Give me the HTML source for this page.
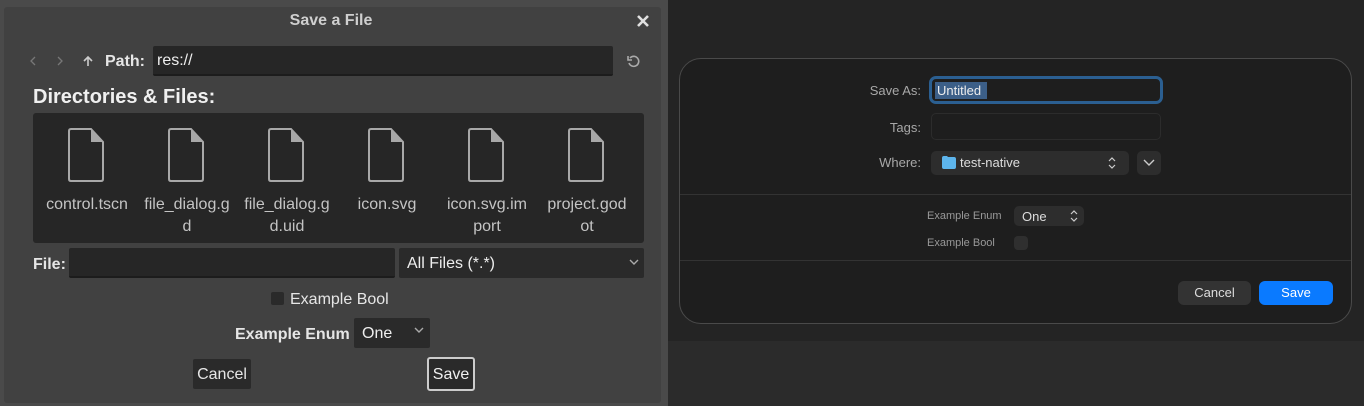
<!DOCTYPE html>
<html><head><meta charset="utf-8"><style>
*{box-sizing:border-box;margin:0;padding:0}
body{width:1364px;height:406px;overflow:hidden;background:#2b2b2b;font-family:"Liberation Sans",sans-serif;position:relative}
.a{position:absolute}
.l{color:#e6e6e6;font-size:16px;font-weight:bold}
.fl{color:#c4c4c4;font-size:16px;text-align:center;width:100px;line-height:22px}
.m{font-size:13px;color:#a8a8a8}
</style></head><body>
<div class="a" style="left:0;top:0;width:668px;height:406px;background:#4a4a4a"></div>
<div class="a" style="left:4px;top:7px;width:657px;height:396px;background:#414141;border-radius:3px"></div>
<div class="a" style="left:668px;top:0;width:696px;height:341px;background:#242424"></div>

<div class="a" style="left:0;width:662px;top:12px;text-align:center;color:#cfcfcf;font-size:16px;font-weight:bold">Save a File</div>
<svg class="a" style="left:636px;top:14px" width="14" height="14"><path d="M2 2L12 12M12 2L2 12" stroke="#e0e0e0" stroke-width="2.6"/></svg>

<svg class="a" style="left:28px;top:55px" width="70" height="12"><path d="M7 2L3 6L7 10" stroke="#777" fill="none" stroke-width="1.3"/><path d="M30 2L34 6L30 10" stroke="#777" fill="none" stroke-width="1.3"/><path d="M60 11V2M56 6L60 2L64 6" stroke="#ccc" fill="none" stroke-width="1.6"/></svg>
<div class="a l" style="left:105px;top:53px">Path:</div>
<div class="a" style="left:153px;top:46px;width:460px;height:30px;background:#262626;border-radius:2px;border-bottom:2px solid #1c1c1c;color:#eee;font-size:16px;padding:6px 4px">res://</div>
<svg class="a" style="left:626px;top:54px" width="14" height="14"><path d="M4 4A5 5 0 1 1 3 9" stroke="#aaa" fill="none" stroke-width="1.6"/><path d="M2 2V6H6" stroke="#aaa" fill="none" stroke-width="1.6"/></svg>

<div class="a" style="left:33px;top:86px;color:#f0f0f0;font-size:20px;font-weight:bold">Directories &amp; Files:</div>
<div class="a" style="left:33px;top:113px;width:611px;height:130px;background:#262626;border-radius:3px"></div>

<svg class="a" style="left:33px;top:126px" width="611" height="60">
<g fill="none" stroke="#a8a8a8" stroke-width="2">
<path d="M38 3H58L70 16V53Q70 55 68 55H38Q36 55 36 53V5Q36 3 38 3Z"/>
<path d="M138 3H158L170 16V53Q170 55 168 55H138Q136 55 136 53V5Q136 3 138 3Z"/>
<path d="M238 3H258L270 16V53Q270 55 268 55H238Q236 55 236 53V5Q236 3 238 3Z"/>
<path d="M338 3H358L370 16V53Q370 55 368 55H338Q336 55 336 53V5Q336 3 338 3Z"/>
<path d="M438 3H458L470 16V53Q470 55 468 55H438Q436 55 436 53V5Q436 3 438 3Z"/>
<path d="M538 3H558L570 16V53Q570 55 568 55H538Q536 55 536 53V5Q536 3 538 3Z"/>
</g>
<g fill="#a8a8a8"><path d="M58 3L70 16H58Z"/><path d="M158 3L170 16H158Z"/><path d="M258 3L270 16H258Z"/><path d="M358 3L370 16H358Z"/><path d="M458 3L470 16H458Z"/><path d="M558 3L570 16H558Z"/></g>
</svg>
<div class="a fl" style="left:37px;top:194px">control.tscn</div>
<div class="a fl" style="left:137px;top:194px">file_dialog.g<br>d</div>
<div class="a fl" style="left:237px;top:194px">file_dialog.g<br>d.uid</div>
<div class="a fl" style="left:337px;top:194px">icon.svg</div>
<div class="a fl" style="left:437px;top:194px">icon.svg.im<br>port</div>
<div class="a fl" style="left:537px;top:194px">project.god<br>ot</div>

<div class="a l" style="left:33px;top:256px">File:</div>
<div class="a" style="left:69px;top:248px;width:326px;height:30px;background:#262626;border-radius:2px;border-bottom:2px solid #1c1c1c"></div>
<div class="a" style="left:399px;top:248px;width:245px;height:30px;background:#2a2a2a;border-radius:2px;color:#eee;font-size:16px;padding:7px 8px">All Files (*.*)</div>
<svg class="a" style="left:629px;top:259px" width="10" height="7"><path d="M1 1L5 5L9 1" stroke="#aaa" fill="none" stroke-width="1.4"/></svg>

<div class="a" style="left:271px;top:292px;width:13px;height:13px;background:#2a2a2a;border-radius:2px"></div>
<div class="a" style="left:290px;top:291px;color:#e6e6e6;font-size:16px">Example Bool</div>
<div class="a l" style="left:235px;top:326px">Example Enum</div>
<div class="a" style="left:354px;top:318px;width:76px;height:30px;background:#2a2a2a;border-radius:2px;color:#eee;font-size:16px;padding:7px 8px">One</div>
<svg class="a" style="left:414px;top:327px" width="10" height="7"><path d="M1 1L5 5L9 1" stroke="#aaa" fill="none" stroke-width="1.4"/></svg>
<div class="a" style="left:193px;top:359px;width:58px;height:30px;background:#2a2a2a;border-radius:2px;color:#e6e6e6;font-size:16px;text-align:center;line-height:32px">Cancel</div>
<div class="a" style="left:427px;top:357px;width:48px;height:34px;background:#2a2a2a;border:2px solid #ccc;border-radius:3px;color:#f0f0f0;font-size:16px;text-align:center;line-height:32px">Save</div>

<div class="a" style="left:679px;top:58px;width:673px;height:266px;background:#1e1e1e;border:1px solid #4a4a4a;border-radius:22px"></div>
<div class="a m" style="left:820px;width:101px;text-align:right;top:83px">Save As:</div>
<div class="a" style="left:929px;top:76px;width:234px;height:28px;border:3px solid #2b5f91;border-radius:7px;background:#1e1e1e"></div>
<div class="a" style="left:935px;top:82px;height:17px;width:52px;background:#3c5f88;color:#eee;font-size:13px;line-height:17px;padding-left:2px">Untitled</div>
<div class="a m" style="left:820px;width:101px;text-align:right;top:120px">Tags:</div>
<div class="a" style="left:931px;top:113px;width:230px;height:27px;border:1px solid #2c2c2c;border-radius:5px"></div>
<div class="a m" style="left:820px;width:101px;text-align:right;top:155px">Where:</div>
<div class="a" style="left:931px;top:151px;width:198px;height:24px;background:#2d2d2d;border-radius:5px"></div>
<svg class="a" style="left:942px;top:156px" width="14" height="13"><path d="M0 2Q0 0 2 0H5L6 1H12Q14 1 14 3V11Q14 13 12 13H2Q0 13 0 11Z" fill="#5db5ec"/></svg>
<div class="a" style="left:960px;top:155px;color:#ddd;font-size:13px">test-native</div>
<svg class="a" style="left:1108px;top:156px" width="8" height="14"><path d="M1 5L4 2L7 5M1 9L4 12L7 9" stroke="#ccc" fill="none" stroke-width="1.2"/></svg>
<div class="a" style="left:1137px;top:151px;width:24px;height:24px;background:#2d2d2d;border-radius:5px"></div>
<svg class="a" style="left:1143px;top:159px" width="12" height="8"><path d="M1 1L6 6L11 1" stroke="#ccc" fill="none" stroke-width="1.4"/></svg>
<div class="a" style="left:680px;top:194px;width:671px;height:1px;background:#333"></div>
<div class="a" style="left:927px;top:210px;font-size:11px;color:#999">Example Enum</div>
<div class="a" style="left:1014px;top:206px;width:70px;height:20px;background:#2d2d2d;border-radius:5px;color:#ddd;font-size:13px;padding:3px 8px">One</div>
<svg class="a" style="left:1070px;top:210px" width="8" height="12"><path d="M1 4L4 1L7 4M1 8L4 11L7 8" stroke="#ccc" fill="none" stroke-width="1.2"/></svg>
<div class="a" style="left:927px;top:237px;font-size:11px;color:#999">Example Bool</div>
<div class="a" style="left:1014px;top:236px;width:14px;height:14px;background:#2f2f2f;border-radius:4px"></div>
<div class="a" style="left:680px;top:260px;width:671px;height:1px;background:#333"></div>
<div class="a" style="left:1178px;top:281px;width:73px;height:24px;background:#333;border-radius:6px;color:#ddd;font-size:13px;text-align:center;line-height:24px">Cancel</div>
<div class="a" style="left:1259px;top:281px;width:74px;height:24px;background:#0a7aff;border-radius:6px;color:#fff;font-size:13px;text-align:center;line-height:24px">Save</div>
</body></html>
